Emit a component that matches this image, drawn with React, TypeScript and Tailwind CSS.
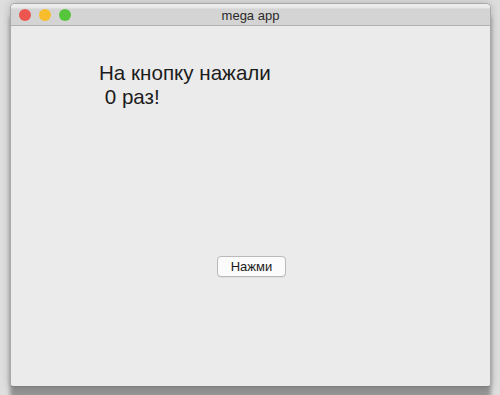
import React, { useState } from "react";

export default function App() {
  const [count, setCount] = useState(0);
  return (
    <div
      className="w-[500px] h-[395px] overflow-hidden bg-[#dedede] pt-[3px] pl-[10px]"
      style={{ fontFamily: '"Liberation Sans", Arial, sans-serif' }}
    >
      <div className="w-[481px] h-[384px] flex flex-col rounded-t-[5px] rounded-b-[3px] border border-[#a9a9a9] border-b-[#7f7f7f] bg-[#ebebeb] shadow-[0_12px_4px_rgba(0,0,0,0.33),0_0_9px_rgba(0,0,0,0.2)] overflow-hidden">
        <div className="relative h-[22px] shrink-0 flex items-center justify-center bg-gradient-to-b from-[#ececec] from-[15%] to-[#d4d4d4] to-[25%] border-b border-[#b1b1b1]">
          <div className="absolute left-[8px] top-[5px] flex gap-[8px]">
            <span className="w-[12px] h-[12px] rounded-full bg-[#ec5650]" />
            <span className="w-[12px] h-[12px] rounded-full bg-[#f8bd2d]" />
            <span className="w-[12px] h-[12px] rounded-full bg-[#55c63c]" />
          </div>
          <span className="text-[13px] text-[#2a2a2a] leading-none mt-[1px]">mega app</span>
        </div>
        <div className="flex-1 flex flex-col">
          <div className="pl-[88px] pt-[35px] text-[20.6px] leading-[24px] text-[#1c1c1c] whitespace-pre">
            {"На кнопку нажали\n " + count + " раз!"}
          </div>
          <div className="flex justify-center mt-[147px] pl-[2px]">
            <button
              onClick={() => setCount(count + 1)}
              className="w-[69px] h-[21px] rounded-[4px] border border-[#b9b9b9] bg-[#fbfbfb] text-[13px] text-[#1a1a1a] leading-none shadow-[0_1px_0_rgba(0,0,0,0.05)]"
            >
              Нажми
            </button>
          </div>
        </div>
      </div>
    </div>
  );
}
